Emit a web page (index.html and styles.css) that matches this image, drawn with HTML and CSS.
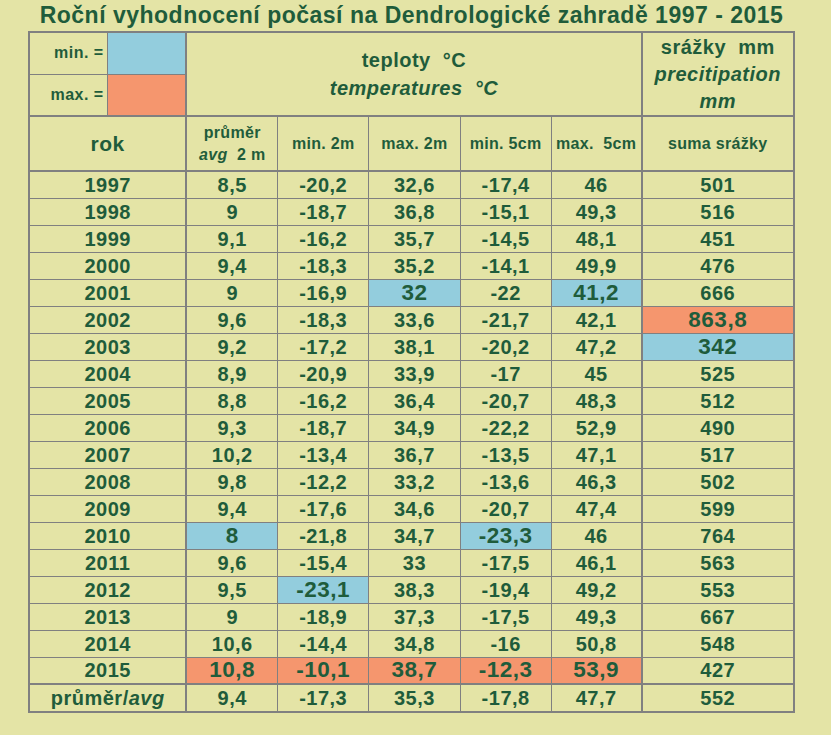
FILE: index.html
```html
<!DOCTYPE html>
<html lang="cs">
<head>
<meta charset="utf-8">
<title>Roční vyhodnocení počasí</title>
<link rel="stylesheet" href="styles.css">
</head>
<body>
<div class="page">
  <h1 class="title">Roční vyhodnocení počasí na Dendrologické zahradě 1997 - 2015</h1>
  <table class="climate">
    <colgroup>
      <col class="c-lab"><col class="c-sw">
      <col class="c-t"><col class="c-t"><col class="c-t"><col class="c-t"><col class="c-t5">
      <col class="c-p">
    </colgroup>
    <thead>
      <tr class="h1">
        <td class="legend-lab">min. =</td>
        <td class="sw blue"></td>
        <td class="group thick-l" colspan="5" rowspan="2"><div class="gl">teploty&nbsp; °C</div><div class="gl"><i>temperatures&nbsp; °C</i></div></td>
        <td class="group precip thick-l" rowspan="2"><div class="pl">srážky&nbsp; mm</div><div class="pl"><i>precitipation</i></div><div class="pl"><i>mm</i></div></td>
      </tr>
      <tr class="h2">
        <td class="legend-lab">max. =</td>
        <td class="sw salmon"></td>
      </tr>
      <tr class="h3">
        <td class="rokh thick-l" colspan="2">rok</td>
        <td class="sub thick-l"><div>průměr</div><div><i>avg</i>&nbsp; 2 m</div></td>
        <td class="sub">min. 2m</td>
        <td class="sub">max. 2m</td>
        <td class="sub">min. 5cm</td>
        <td class="sub">max.&nbsp; 5cm</td>
        <td class="sub thick-l">suma srážky</td>
      </tr>
    </thead>
    <tbody>
      <tr><td colspan="2" class="yr">1997</td><td class="thick-l">8,5</td><td>-20,2</td><td>32,6</td><td>-17,4</td><td>46</td><td class="thick-l">501</td></tr>
      <tr><td colspan="2" class="yr">1998</td><td class="thick-l">9</td><td>-18,7</td><td>36,8</td><td>-15,1</td><td>49,3</td><td class="thick-l">516</td></tr>
      <tr><td colspan="2" class="yr">1999</td><td class="thick-l">9,1</td><td>-16,2</td><td>35,7</td><td>-14,5</td><td>48,1</td><td class="thick-l">451</td></tr>
      <tr><td colspan="2" class="yr">2000</td><td class="thick-l">9,4</td><td>-18,3</td><td>35,2</td><td>-14,1</td><td>49,9</td><td class="thick-l">476</td></tr>
      <tr><td colspan="2" class="yr">2001</td><td class="thick-l">9</td><td>-16,9</td><td class="hl blue">32</td><td>-22</td><td class="hl blue">41,2</td><td class="thick-l">666</td></tr>
      <tr><td colspan="2" class="yr">2002</td><td class="thick-l">9,6</td><td>-18,3</td><td>33,6</td><td>-21,7</td><td>42,1</td><td class="thick-l hl salmon">863,8</td></tr>
      <tr><td colspan="2" class="yr">2003</td><td class="thick-l">9,2</td><td>-17,2</td><td>38,1</td><td>-20,2</td><td>47,2</td><td class="thick-l hl blue">342</td></tr>
      <tr><td colspan="2" class="yr">2004</td><td class="thick-l">8,9</td><td>-20,9</td><td>33,9</td><td>-17</td><td>45</td><td class="thick-l">525</td></tr>
      <tr><td colspan="2" class="yr">2005</td><td class="thick-l">8,8</td><td>-16,2</td><td>36,4</td><td>-20,7</td><td>48,3</td><td class="thick-l">512</td></tr>
      <tr><td colspan="2" class="yr">2006</td><td class="thick-l">9,3</td><td>-18,7</td><td>34,9</td><td>-22,2</td><td>52,9</td><td class="thick-l">490</td></tr>
      <tr><td colspan="2" class="yr">2007</td><td class="thick-l">10,2</td><td>-13,4</td><td>36,7</td><td>-13,5</td><td>47,1</td><td class="thick-l">517</td></tr>
      <tr><td colspan="2" class="yr">2008</td><td class="thick-l">9,8</td><td>-12,2</td><td>33,2</td><td>-13,6</td><td>46,3</td><td class="thick-l">502</td></tr>
      <tr><td colspan="2" class="yr">2009</td><td class="thick-l">9,4</td><td>-17,6</td><td>34,6</td><td>-20,7</td><td>47,4</td><td class="thick-l">599</td></tr>
      <tr><td colspan="2" class="yr">2010</td><td class="thick-l hl blue">8</td><td>-21,8</td><td>34,7</td><td class="hl blue">-23,3</td><td>46</td><td class="thick-l">764</td></tr>
      <tr><td colspan="2" class="yr">2011</td><td class="thick-l">9,6</td><td>-15,4</td><td>33</td><td>-17,5</td><td>46,1</td><td class="thick-l">563</td></tr>
      <tr><td colspan="2" class="yr">2012</td><td class="thick-l">9,5</td><td class="hl blue">-23,1</td><td>38,3</td><td>-19,4</td><td>49,2</td><td class="thick-l">553</td></tr>
      <tr><td colspan="2" class="yr">2013</td><td class="thick-l">9</td><td>-18,9</td><td>37,3</td><td>-17,5</td><td>49,3</td><td class="thick-l">667</td></tr>
      <tr><td colspan="2" class="yr">2014</td><td class="thick-l">10,6</td><td>-14,4</td><td>34,8</td><td>-16</td><td>50,8</td><td class="thick-l">548</td></tr>
      <tr><td colspan="2" class="yr">2015</td><td class="thick-l hl salmon">10,8</td><td class="hl salmon">-10,1</td><td class="hl salmon">38,7</td><td class="hl salmon">-12,3</td><td class="hl salmon">53,9</td><td class="thick-l">427</td></tr>
    </tbody>
    <tfoot>
      <tr class="avg"><td colspan="2" class="yr">průměr/<i>avg</i></td><td class="thick-l">9,4</td><td>-17,3</td><td>35,3</td><td>-17,8</td><td>47,7</td><td class="thick-l">552</td></tr>
    </tfoot>
  </table>
</div>
</body>
</html>
```

FILE: styles.css
```css
html, body {
  margin: 0;
  padding: 0;
  background: #e4e4a6;
}

body {
  font-family: "Liberation Sans", Arial, sans-serif;
  font-weight: bold;
  color: #1f5c3b;
}

.page {
  width: 767px;
  padding-left: 28px;
}

.title {
  margin: 0;
  height: 31px;
  font-size: 23px;
  line-height: 31px;
  letter-spacing: 0.5px;
  font-weight: bold;
  text-align: center;
  white-space: nowrap;
}

.climate {
  border-collapse: collapse;
  table-layout: fixed;
  width: 767px;
  border: 2px solid #808080;
}

.c-lab { width: 78px; }
.c-sw { width: 79px; }
.c-t { width: 91px; }
.c-t5 { width: 90px; }
.c-p { width: 152px; }

.climate td {
  border: 1px solid #808080;
  padding: 0;
  text-align: center;
  vertical-align: middle;
  font-size: 20px;
  line-height: 22px;
  letter-spacing: 0.5px;
  white-space: nowrap;
}

.climate td.thick-l { border-left-width: 2px; }

.climate tbody tr { height: 27px; }
.climate .h1 { height: 42px; }
.climate .h2 { height: 42px; }
.climate .h3 { height: 55px; }
.climate .h3 td { border-top-width: 2px; border-bottom-width: 2px; }
.climate .avg td { border-top-width: 2px; height: 26px; }

.climate td.legend-lab {
  text-align: right;
  padding-right: 3px;
  font-size: 16px;
}

.blue { background: #93cddd; }
.salmon { background: #f5966e; }

.climate td.hl { font-size: 22.5px; }

.group .gl {
  font-size: 20px;
  line-height: 28px;
}

.precip .pl {
  font-size: 20px;
  line-height: 27px;
}

.climate td.rokh { font-size: 21px; }

.climate td.sub {
  font-size: 16px;
  line-height: 22px;
  letter-spacing: 0.3px;
}
```
